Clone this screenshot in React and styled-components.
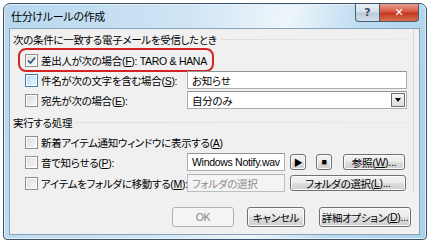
import React from 'react'
import styled, { createGlobalStyle, css } from 'styled-components'

const GlobalStyle = createGlobalStyle`
  html, body {
    margin: 0;
    padding: 0;
    background: #ffffff;
  }
  body {
    font-family: "Liberation Sans", "Noto Sans CJK JP", sans-serif;
    font-size: 10.5px;
    letter-spacing: -0.3px;
    font-feature-settings: 'palt';
    color: #000;
  }
`

const Window = styled.div`
  position: relative;
  margin: 3px 0 0 3px;
  width: 422px;
  height: 235px;
  border: 1px solid #3d5266;
  border-radius: 7px 7px 4px 4px;
  background: linear-gradient(100deg, #b7d7ee 0%, #cfe5f4 40%, #eef6fb 62%, #bcdcf1 78%, #a9d2ec 100%);
  box-shadow: inset 0 0 0 1px #e4f1fa;
  display: flex;
  flex-direction: column;
`

const TitleBar = styled.div`
  height: 24px;
  display: flex;
  align-items: center;
  padding-left: 7px;
  font-size: 11px;
`

const CaptionButtons = styled.div`
  position: absolute;
  top: 0;
  right: 7px;
  display: flex;
`

const CaptionButton = styled.div`
  height: 17px;
  border: 1px solid #4a5d70;
  border-top: none;
  display: flex;
  align-items: center;
  justify-content: center;
  color: #fff;
  font-family: "DejaVu Sans", sans-serif;
  font-weight: bold;
  letter-spacing: 0;
  ${(p) =>
    p.$close
      ? css`
          width: 38px;
          border-radius: 0 0 4px 0;
          background: linear-gradient(#e8a090 0%, #d4533d 48%, #c23419 52%, #d8714f 100%);
          font-size: 11px;
        `
      : css`
          width: 23px;
          border-right: none;
          border-radius: 0 0 0 4px;
          background: linear-gradient(#e9f1f6 0%, #d3e0ea 48%, #bccbd8 52%, #cfdfea 100%);
          color: #3b4c5c;
          font-size: 11px;
        `}
`

const Client = styled.div`
  flex: 1;
  margin: 0 6px 4px 5px;
  background: #f0f0f0;
  border: 1px solid #8aa2b8;
  display: flex;
  flex-direction: column;
  padding: 0 0 0 3px;
`

const Panel = styled.div`
  margin-right: 5px;
  border-right: 1px solid #dadada;
  display: flex;
  flex-direction: column;
`

const GroupHeader = styled.div`
  height: 20px;
  display: flex;
  align-items: center;
  gap: 4px;
  margin-top: ${(p) => p.$top || 0}px;
  white-space: nowrap;
  &::after {
    content: '';
    flex: 1;
    height: 1px;
    background: linear-gradient(90deg, #dcdcdc, #ebebeb);
  }
`

const Row = styled.div`
  position: relative;
  height: 20px;
  display: flex;
  align-items: center;
  padding-left: 12px;
  margin-top: ${(p) => p.$top || 0}px;
`

const Check = styled.span`
  width: 11px;
  height: 11px;
  flex: none;
  border: 1px solid ${(p) => (p.$hover ? '#3c7fb1' : '#8e8f8f')};
  background: ${(p) =>
    p.$hover
      ? 'linear-gradient(135deg, #b9def7, #e6f4fd)'
      : 'linear-gradient(135deg, #dcdcdc, #f8f8f8)'};
  box-shadow: inset 0 0 0 1px #fff;
  display: flex;
  align-items: center;
  justify-content: center;
  margin-right: 3px;
`

const Label = styled.span`
  white-space: nowrap;
  width: ${(p) => (p.$w ? `${p.$w}px` : 'auto')};
  flex: none;
`

const Highlight = styled.span`
  position: absolute;
  left: 5px;
  top: -2px;
  width: 192px;
  height: 20px;
  border: 2px solid #d42323;
  border-radius: 8px;
  pointer-events: none;
`

const Field = styled.div`
  height: 16px;
  width: ${(p) => p.$w}px;
  flex: none;
  border: 1px solid ${(p) => (p.$disabled ? '#b8c0c7' : '#abadb3')};
  border-top-color: ${(p) => (p.$disabled ? '#aeb6bd' : '#8f949b')};
  background: ${(p) => (p.$disabled ? '#f4f4f4' : '#fff')};
  color: ${(p) => (p.$disabled ? '#8d8d8d' : '#000')};
  display: flex;
  align-items: center;
  padding-left: 4px;
  box-sizing: content-box;
  white-space: nowrap;
  overflow: hidden;
`

const DropArrow = styled.span`
  margin-left: auto;
  margin-right: 1px;
  width: 12px;
  height: 12px;
  border: 1px solid #707070;
  background: linear-gradient(#f6f6f6, #dcdcdc);
  display: flex;
  align-items: center;
  justify-content: center;
  &::before {
    content: '';
    border-left: 3px solid transparent;
    border-right: 3px solid transparent;
    border-top: 4px solid #000;
  }
`

const Button = styled.div`
  height: ${(p) => p.$h || 16}px;
  width: ${(p) => p.$w}px;
  flex: none;
  margin-left: ${(p) => p.$ml || 0}px;
  box-sizing: border-box;
  border: 1px solid ${(p) => (p.$disabled ? '#adb2b5' : '#707070')};
  border-radius: 3px;
  background: ${(p) =>
    p.$disabled
      ? '#f4f4f4'
      : 'linear-gradient(#f2f2f2 0%, #ebebeb 48%, #dddddd 52%, #cfcfcf 100%)'};
  box-shadow: inset 0 0 0 1px ${(p) => (p.$disabled ? '#f4f4f4' : '#fcfcfc')};
  color: ${(p) => (p.$disabled ? '#838383' : '#000')};
  display: flex;
  align-items: center;
  justify-content: center;
  white-space: nowrap;
  font-size: ${(p) => p.$fs || 10.5}px;
`

const Footer = styled.div`
  margin-top: auto;
  height: 20px;
  margin-bottom: 7px;
  display: flex;
  padding-left: 159px;
`

const Tick = () => (
  <svg width="9" height="9" viewBox="0 0 9 9">
    <path d="M1 4.5 L3.5 7 L8 1.5" fill="none" stroke="#2a4f86" strokeWidth="1.6" />
  </svg>
)

const App = () => (
  <>
    <GlobalStyle />
    <Window>
      <TitleBar>仕分けルールの作成</TitleBar>
      <CaptionButtons>
        <CaptionButton>?</CaptionButton>
        <CaptionButton $close>✕</CaptionButton>
      </CaptionButtons>
      <Client>
        <Panel>
          <GroupHeader>次の条件に一致する電子メールを受信したとき</GroupHeader>
          <Row $top={1}>
            <Highlight />
            <Check>
              <Tick />
            </Check>
            <Label>
              差出人が次の場合(<u>F</u>): TARO &amp; HANA
            </Label>
          </Row>
          <Row>
            <Check $hover />
            <Label $w={146}>
              件名が次の文字を含む場合(<u>S</u>):
            </Label>
            <Field $w={214}>お知らせ</Field>
          </Row>
          <Row>
            <Check />
            <Label $w={146}>
              宛先が次の場合(<u>E</u>):
            </Label>
            <Field $w={214}>
              自分のみ
              <DropArrow />
            </Field>
          </Row>
          <GroupHeader $top={2}>実行する処理</GroupHeader>
          <Row>
            <Check />
            <Label>
              新着アイテム通知ウィンドウに表示する(<u>A</u>)
            </Label>
          </Row>
          <Row>
            <Check />
            <Label $w={146}>
              音で知らせる(<u>P</u>):
            </Label>
            <Field $w={92}>Windows Notify.wav</Field>
            <Button $w={16} $ml={5} $fs={9}>
              ▶
            </Button>
            <Button $w={16} $ml={10} $fs={9}>
              ■
            </Button>
            <Button $w={62} $ml={11}>
              参照(<u>W</u>)...
            </Button>
          </Row>
          <Row $top={1}>
            <Check />
            <Label $w={146}>
              アイテムをフォルダに移動する(<u>M</u>):
            </Label>
            <Field $w={92} $disabled>
              フォルダの選択
            </Field>
            <Button $w={116} $ml={5}>
              フォルダの選択(<u>L</u>)...
            </Button>
          </Row>
        </Panel>
        <Footer>
          <Button $w={62} $h={20} $disabled>
            OK
          </Button>
          <Button $w={58} $h={20} $ml={13}>
            キャンセル
          </Button>
          <Button $w={92} $h={20} $ml={14}>
            詳細オプション(<u>D</u>)...
          </Button>
        </Footer>
      </Client>
    </Window>
  </>
)

export default App
